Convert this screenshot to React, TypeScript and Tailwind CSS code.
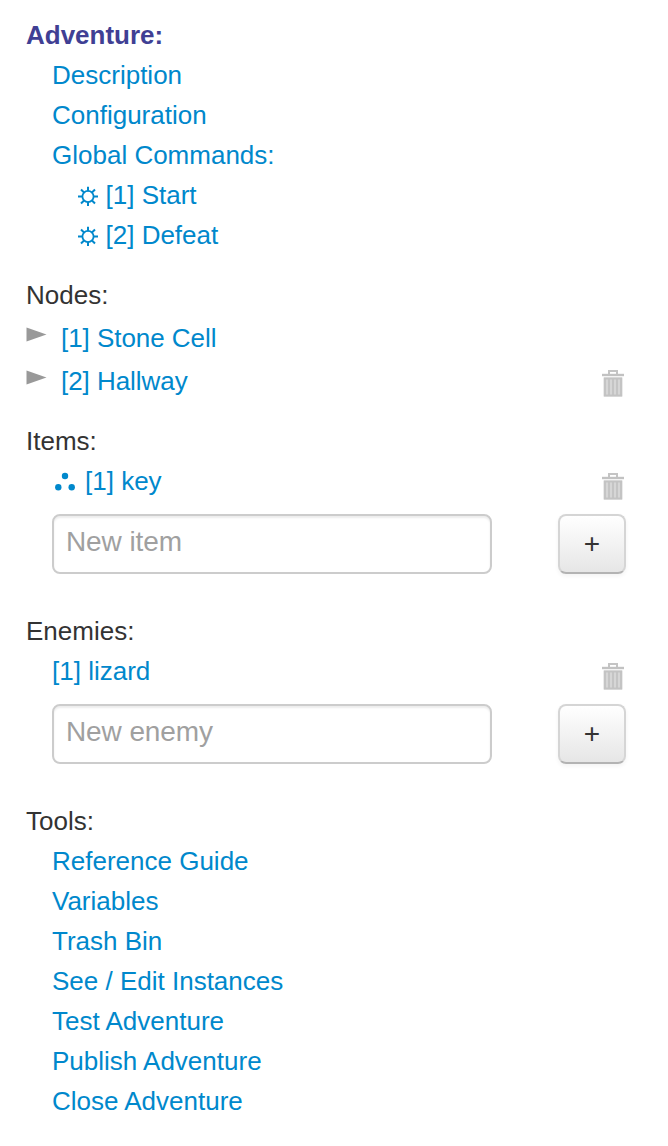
import type { ReactNode } from 'react'

function Trash() {
  return (
    <svg width="22" height="27" viewBox="0 0 22 27" className="block shrink-0">
      <path d="M7 4V1h8v3" fill="none" stroke="#c4c4c4" strokeWidth="2" />
      <path d="M0 3.800h22v2.400H0z" fill="#c2c2c2" />
      <path d="M1.500 7.500h19v19h-19z" fill="#d6d6d6" />
      <path d="M3 8v18M7 9v16M11 9v16M15 9v16M19 8v18M2 8.500h18M2 25.500h18" stroke="#c3c3c3" strokeWidth="1.800" />
    </svg>
  )
}

function Gear() {
  return (
    <svg width="20" height="20" viewBox="0 0 20 20" className="mr-[7.500px] mt-[2px] shrink-0" fill="none" stroke="#0088cc" strokeWidth="1.800">
      <circle cx="10" cy="10.500" r="5.600" />
      <path d="M10 0.800v4.500M10 15.700v4.300M0 10.500h4.800M15.200 10.500H20M3 3.500l3.300 3.300M13.700 14.200l3.300 3.300M17 3.500l-3.300 3.300M6.300 14.200l-3.300 3.300" strokeWidth="2" />
    </svg>
  )
}

function Dots() {
  return (
    <svg width="20" height="20" viewBox="0 0 20 20" className="ml-[3px] mr-[10px] mt-[2px] shrink-0" fill="#0088cc">
      <circle cx="10" cy="4" r="3.200" />
      <circle cx="3.300" cy="15.300" r="3.200" />
      <circle cx="16.700" cy="15.300" r="3.200" />
    </svg>
  )
}

function Row({ children, className = '' }: { children: ReactNode; className?: string }) {
  return <li className={`flex h-10 items-center whitespace-nowrap ${className}`}>{children}</li>
}

function NodeRow({ label, removable }: { label: string; removable?: boolean }) {
  return (
    <li className="flex h-[43px] items-center text-[#0088cc]">
      <svg width="21" height="15" viewBox="0 0 21 15" className="mr-[14px] -mt-[7px]">
        <path d="M0.500 0.500L20.500 7.500L0.500 14.500z" fill="#999999" />
      </svg>
      <a href="#" className="tracking-[-0.05px]">{label}</a>
      {removable && <button className="ml-auto mr-[2px] mt-[6px]"><Trash /></button>}
    </li>
  )
}

function NewEntry({ placeholder }: { placeholder: string }) {
  return (
    <div className="mt-[13px] flex justify-between pl-[26px]">
      <input
        placeholder={placeholder}
        className="h-[60px] w-[440px] rounded-[8px] border-2 border-[#cccccc] px-3 pb-[4px] text-[28px] tracking-[-0.1px] shadow-[inset_0_2px_2px_rgba(0,0,0,0.075)] outline-none placeholder:text-[#a0a0a0]"
      />
      <button className="h-[60px] w-[68px] rounded-[8px] border-2 border-[#d5d5d5] border-b-[#b3b3b3] bg-linear-to-b from-white to-[#e6e6e6] text-[28px] shadow-[0_2px_4px_rgba(0,0,0,0.05)]">
        +
      </button>
    </div>
  )
}

const tools = ['Reference Guide', 'Variables', 'Trash Bin', 'See / Edit Instances', 'Test Adventure', 'Publish Adventure', 'Close Adventure']

export default function App() {
  return (
    <div className="h-[1146px] w-[668px] bg-white pl-[26px] pr-[42px] pt-[15px] font-['Liberation_Sans',Arial,sans-serif] text-[26px] leading-10 text-[#333333]">
      <section>
        <h2 className="h-10 font-bold text-[#403f94]">Adventure:</h2>
        <ul className="pl-[26px] text-[#0088cc]">
          <Row><a href="#">Description</a></Row>
          <Row><a href="#">Configuration</a></Row>
          <Row><a href="#">Global Commands:</a></Row>
          <Row className="pl-[26px]"><Gear /><a href="#">[1] Start</a></Row>
          <Row className="pl-[26px]"><Gear /><a href="#">[2] Defeat</a></Row>
        </ul>
      </section>
      <section className="mt-5">
        <h2 className="h-10">Nodes:</h2>
        <ul className="mt-px">
          <NodeRow label="[1] Stone Cell" />
          <NodeRow label="[2] Hallway" removable />
        </ul>
      </section>
      <section className="mt-[19px]">
        <h2 className="h-10">Items:</h2>
        <ul className="pl-[26px] text-[#0088cc]">
          <Row><Dots /><a href="#">[1] key</a><button className="ml-auto mr-[2px] mt-[10px]"><Trash /></button></Row>
        </ul>
        <NewEntry placeholder="New item" />
      </section>
      <section className="mt-[37px]">
        <h2 className="h-10">Enemies:</h2>
        <ul className="pl-[26px] text-[#0088cc]">
          <Row><a href="#">[1] lizard</a><button className="ml-auto mr-[2px] mt-[10px]"><Trash /></button></Row>
        </ul>
        <NewEntry placeholder="New enemy" />
      </section>
      <section className="mt-[37px]">
        <h2 className="h-10">Tools:</h2>
        <ul className="pl-[26px] text-[#0088cc]">
          {tools.map((tool) => (
            <Row key={tool}><a href="#">{tool}</a></Row>
          ))}
        </ul>
      </section>
    </div>
  )
}
